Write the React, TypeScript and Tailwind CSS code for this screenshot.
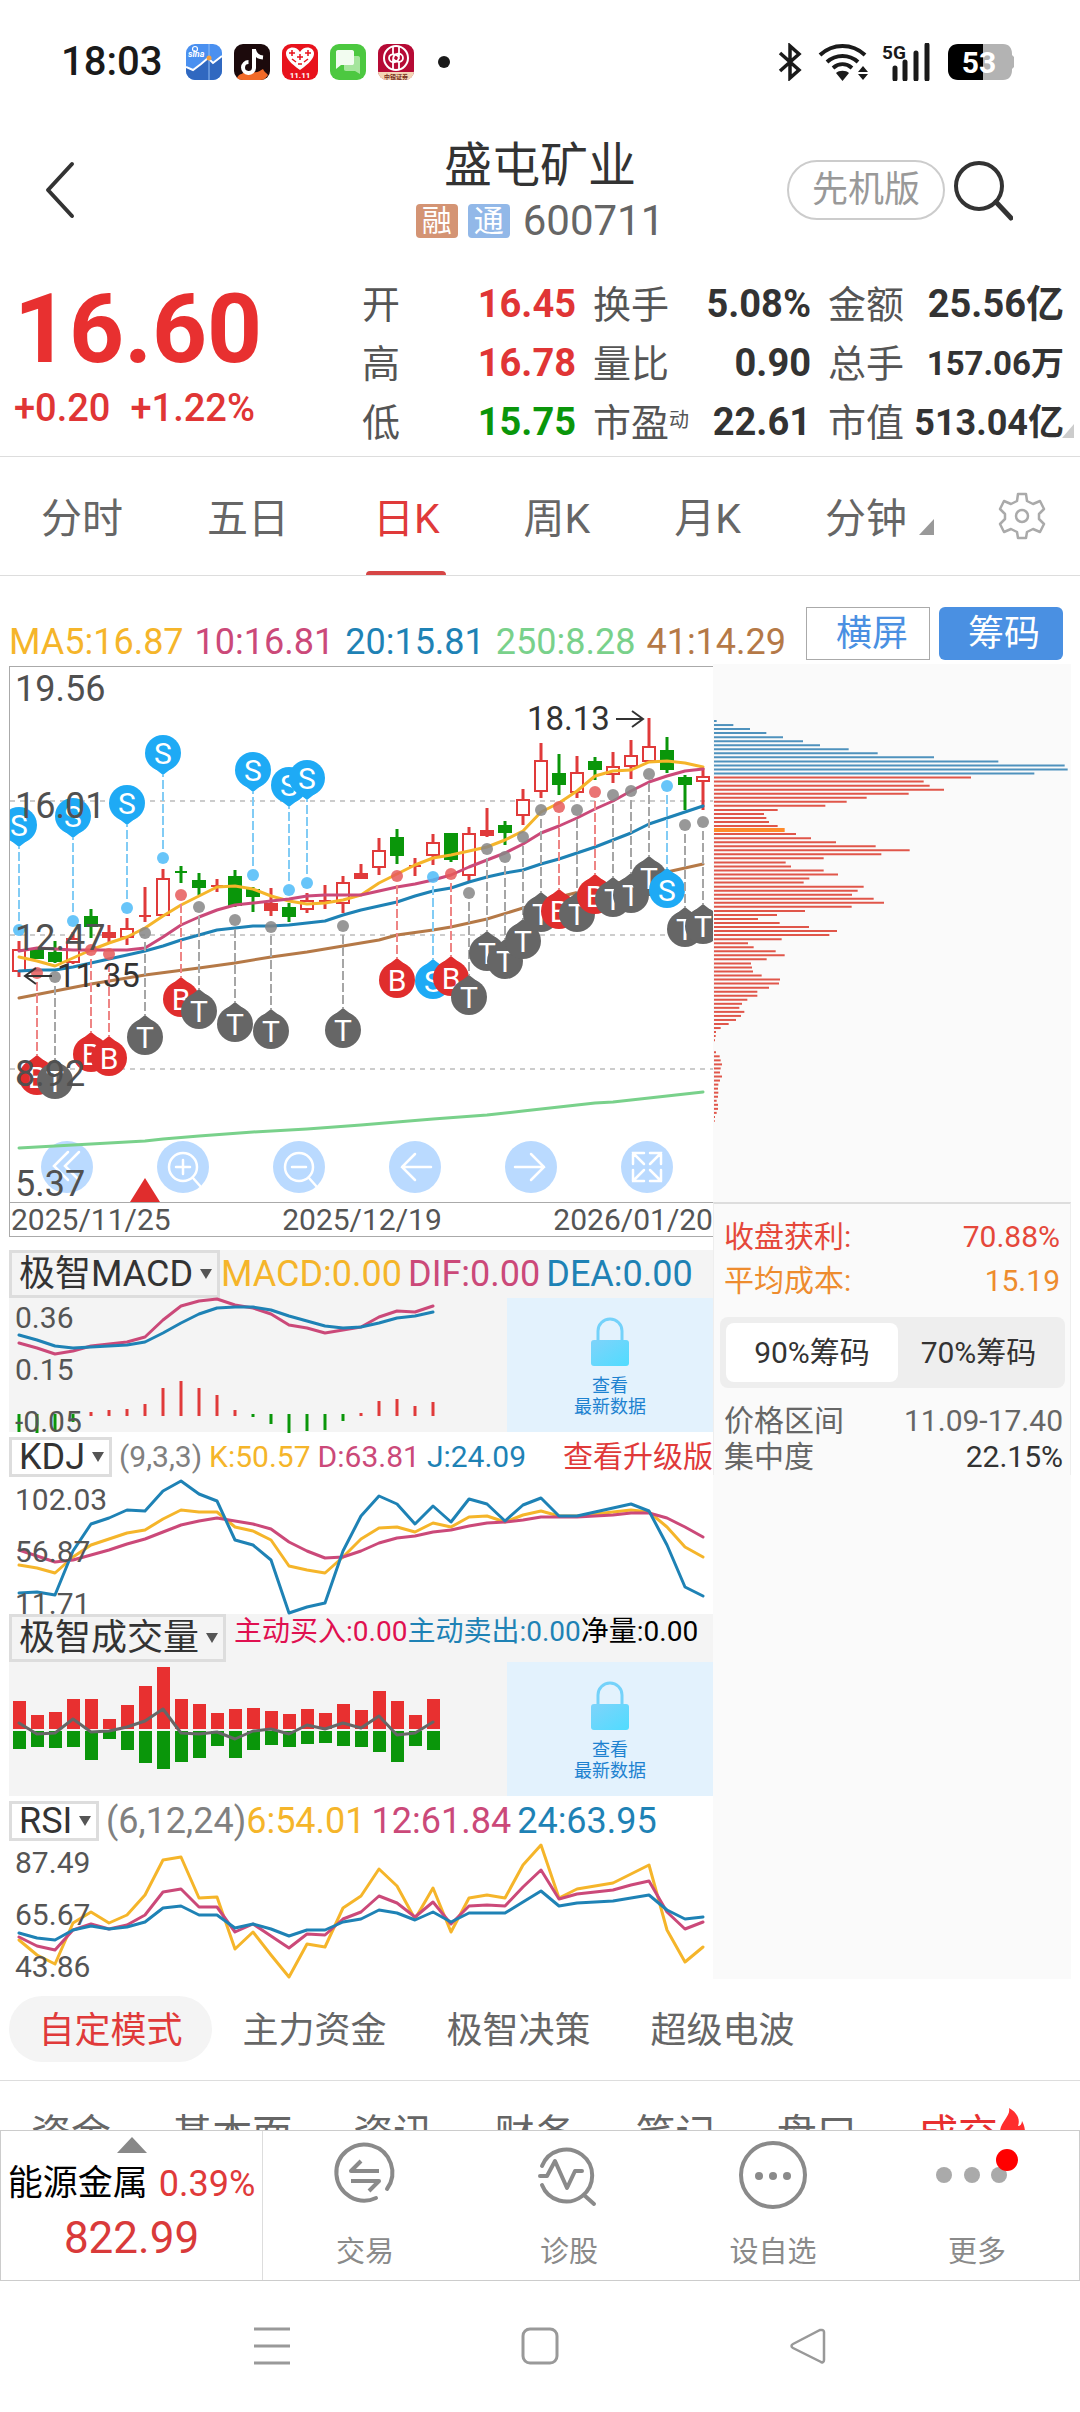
import React, { useState } from "react";

const YELLOW = "#f5b52a";
const PINK = "#cb4979";
const BLUE = "#1e82b5";
const BROWN = "#b57947";
const MINT = "#79d18b";
const UP = "#e03a3a";
const DOWN = "#0a960a";

/* Horizontal position of the n-th trading day. */
const dayX = (i: number) => 19 + i * 18;
const toPoints = (ys: number[]) => ys.map((y, i) => `${dayX(i)},${y}`).join(" ");
const scaled = (top: number, vs: number[]) => toPoints(vs.map((v) => Math.round(top + v / 3)));

type Kind = "r" | "g" | "h";
/* kind (r = filled red, g = green, h = hollow red), high, bodyTop, bodyBottom, low */
const candles: [Kind, number, number, number, number][] = [
  ["h", 941, 950, 971, 977], ["g", 947, 950, 958, 959], ["g", 941, 953, 961, 963], ["h", 932, 939, 962, 964],
  ["g", 909, 917, 926, 938], ["r", 925, 933, 937, 943], ["h", 918, 929, 937, 945], ["r", 887, 915, 917, 922],
  ["h", 869, 879, 915, 916], ["g", 866, 871, 873, 883], ["g", 873, 881, 887, 895], ["r", 879, 885, 887, 892],
  ["g", 870, 877, 905, 907], ["g", 887, 890, 896, 912], ["r", 888, 904, 910, 916], ["g", 903, 908, 916, 922],
  ["h", 893, 901, 909, 913], ["r", 885, 900, 902, 909], ["h", 876, 883, 903, 913], ["r", 864, 874, 878, 878],
  ["h", 838, 851, 867, 875], ["g", 829, 838, 855, 864], ["r", 858, 865, 867, 876], ["h", 834, 843, 855, 865],
  ["g", 833, 834, 859, 862], ["h", 827, 834, 875, 881], ["r", 808, 831, 835, 837], ["g", 821, 826, 832, 845],
  ["h", 789, 800, 815, 825], ["h", 743, 761, 791, 798], ["g", 754, 774, 784, 795], ["h", 756, 773, 792, 798],
  ["g", 757, 762, 769, 780], ["h", 752, 767, 774, 783], ["h", 740, 756, 766, 779], ["h", 718, 747, 761, 761],
  ["g", 737, 751, 769, 773], ["g", 775, 778, 784, 810], ["h", 768, 777, 781, 810],
];

const ma5 = [957, 961, 966, 958, 950, 943, 937, 928, 916, 905, 896, 887, 886, 889, 896, 901, 904, 903, 900, 895, 883, 874, 865, 858, 855, 851, 847, 840, 831, 812, 803, 791, 776, 771, 770, 762, 761, 763, 767];
const ma10 = [951, 948, 949, 950, 950, 950, 950, 948, 937, 925, 917, 910, 905, 903, 901, 899, 896, 895, 895, 895, 891, 887, 884, 880, 875, 867, 860, 853, 844, 833, 826, 818, 809, 801, 791, 782, 776, 771, 769];
const ma20 = [971, 970, 970, 967, 963, 959, 955, 951, 946, 940, 935, 930, 928, 926, 926, 925, 923, 921, 915, 910, 906, 902, 896, 891, 888, 882, 877, 873, 870, 864, 859, 853, 847, 840, 833, 824, 818, 812, 806];
const ma41 = "19,998 55,991 91,984 145,975 199,968 235,963 271,957 307,952 343,946 379,940 397,935 433,930 451,927 487,919 523,908 559,897 595,888 631,880 667,872 703,864";
const ma250 = "19,1148 91,1144 145,1141 163,1139 199,1136 253,1132 307,1129 361,1125 397,1122 433,1119 487,1115 523,1111 559,1107 595,1103 613,1102 703,1092";

/* day index, letter, y of the dot, +1 when the pin hangs below it and -1 when above */
const pins: [number, "S" | "B" | "T", number, 1 | -1][] = [
  [0, "S", 930, -1], [1, "B", 973, 1], [2, "T", 977, 1], [3, "S", 921, -1], [4, "B", 950, 1], [5, "B", 954, 1],
  [6, "S", 908, -1], [7, "T", 933, 1], [8, "S", 858, -1], [9, "B", 895, 1], [10, "T", 907, 1], [12, "T", 920, 1],
  [13, "S", 875, -1], [14, "T", 927, 1], [15, "S", 890, -1], [16, "S", 883, -1], [18, "T", 926, 1], [21, "B", 876, 1],
  [23, "S", 877, 1], [24, "B", 874, 1], [25, "T", 893, 1], [26, "T", 849, 1], [27, "T", 857, 1], [28, "T", 837, 1],
  [29, "T", 810, 1], [30, "B", 807, 1], [31, "T", 810, 1], [32, "B", 792, 1], [33, "T", 795, 1], [34, "T", 791, 1],
  [35, "T", 774, 1], [36, "S", 786, 1], [37, "T", 825, 1], [38, "T", 822, 1],
];
const pinFill = { S: "#1eaaf5", B: "#e02d2d", T: "#666666" };
const dotFill = { S: "#4dbbf8", B: "#e65a5a", T: "#868686" };
const stemFill = { S: "#82ccf5", B: "#ee8585", T: "#a6a6a6" };

const chipEnds = [
  50, 100, 150, 199, 249, 309, 360, 446, 533, 702, 895, 1094, 1103, 1003, 813, 671, 689, 732, 626, 500, 440, 376, 233,
  192, 199, 207, 233, 254, 288, 333, 408, 527, 629, 544, 371, 257, 273, 371, 414, 328, 311, 491, 473, 456, 521, 552,
  455, 315, 231, 174, 239, 327, 411, 388, 245, 144, 161, 227, 254, 200, 153, 156, 159, 185, 240, 237, 207, 172, 172,
  142, 126, 118, 133, 123, 108, 86, 62, 48, 47, 45, 42, 42, 48, 59, 62, 66, 62, 60, 66, 60, 55, 54, 55, 54, 50, 54, 54,
  50, 45, 44,
];

const axis = "fill-[#505050] text-[36px]";
const axisSmall = "fill-[#555555] text-[30px]";

function Line({ points, color }: { points: string; color: string }) {
  return <polyline points={points} fill="none" stroke={color} strokeWidth="3" strokeLinejoin="round" strokeLinecap="round" />;
}

function StatusBar() {
  return (
    <div className="flex h-[124px] items-center justify-between pr-[66px] pl-[61px] text-[#1a1a1a]">
      <div className="flex items-center gap-3">
        <span className="mr-3 text-[40px] leading-[48px] font-medium">18:03</span>
        <svg width="36" height="36" viewBox="0 0 36 36">
          <rect width="36" height="36" rx="9" fill="#4a90f0" />
          <path d="M0 23l7 3 8-6 7-6 5 5 9-7v15a9 9 0 0 1-9 9H9a9 9 0 0 1-9-9z" fill="#3068c0" />
          <path d="M0 23l7 3 8-6 7-6 5 5 9-7" fill="none" stroke="#fff" strokeWidth="2" />
          <path d="M23 0v36" stroke="#8fbdf5" strokeWidth="1" />
          <circle cx="23" cy="14" r="2.500" fill="#f5a040" />
          <text x="2" y="13" className="fill-white text-[9px] font-bold italic">sina</text>
          <circle cx="9" cy="5" r="2.500" fill="none" stroke="#fff" strokeWidth="1.2" />
        </svg>
        <svg width="36" height="36" viewBox="0 0 36 36">
          <rect width="36" height="36" rx="9" fill="#1c0a0c" />
          <path d="M3 34c2-5 5-3 7-6 3 3 5 1 8-1 3 3 8 0 11-2 1 3 4 4 5 6-2 3-4 5-8 5H9c-3 0-5-1-6-2z" fill="#f26a28" />
          <path d="M20 5v19a5.500 5.500 0 1 1-5.500-6M20 6c1 4 4 7 9 7.500" fill="none" stroke="#fff" strokeWidth="4" />
        </svg>
        <svg width="36" height="36" viewBox="0 0 36 36">
          <rect width="36" height="36" rx="9" fill="#e8121c" />
          <path d="M18 26C8 19 4 14 4 9.500 4 3 14 1 18 8c4-7 14-5 14 1.500C32 14 28 19 18 26z" fill="#fff" />
          <path d="M7 9h6M10 6v6M23 9h6M26 6v6M15 13h6M18 10v6M10 15l4 3M26 15l-4 3M16 20h4" fill="none" stroke="#e8121c" strokeWidth="1.500" />
          <text x="18" y="34" textAnchor="middle" className="fill-white text-[8px] font-bold">11.11</text>
        </svg>
        <svg width="36" height="36" viewBox="0 0 36 36">
          <rect width="36" height="36" rx="9" fill="#4cc840" />
          <path d="M14 12h14c1.500 0 2 1 2 2v16l-5-3H16c-1.500 0-2-1-2-2z" fill="#a5e59c" />
          <path d="M8 6h14c1.500 0 2 1 2 2v11c0 1.500-1 2-2 2H11l-5 4V8c0-1 .5-2 2-2z" fill="#f2fcf0" />
        </svg>
        <svg width="36" height="36" viewBox="0 0 36 36">
          <rect width="36" height="36" rx="9" fill="#b60a35" />
          <path d="M0 28h36a9 9 0 0 1-9 8H9a9 9 0 0 1-9-8z" fill="#f3d5b5" />
          <circle cx="18" cy="14" r="12" fill="none" stroke="#fff" strokeWidth="2" />
          <path d="M15 3v7M21 18v7M21 3v9c0 8-10 8-10 2s10-4 10 1M15 25v-9c0-8 10-8 10-2s-9 4-10 0" fill="none" stroke="#fff" strokeWidth="1.800" />
          <text x="18" y="35" textAnchor="middle" className="fill-[#7a3020] text-[6px] font-bold">中银证券</text>
        </svg>
        <span className="ml-3 h-3 w-3 rounded-full bg-[#1a1a1a]" />
      </div>
      <div className="flex items-center">
        <svg width="24" height="38" viewBox="0 0 24 38" fill="none" stroke="#1a1a1a" strokeWidth="3.500">
          <path d="M2 10l19 17-9 8V3l9 8L2 28" />
        </svg>
        <svg className="ml-4" width="52" height="38" viewBox="0 0 52 38" fill="none" stroke="#1a1a1a">
          <path d="M2 12c13-12 32-12 45 0M9 19c9-8 22-8 31 0M15 25c6-5 13-5 19 0" strokeWidth="4" />
          <path d="M18 30c3-3 10-3 13 0l-6.500 8z" fill="#1a1a1a" stroke="none" />
          <path d="M40 29l5-6 5 6zM40 31h10l-5 6z" fill="#1a1a1a" stroke="none" />
        </svg>
        <svg className="ml-3" width="52" height="38" viewBox="0 0 52 38">
          <text x="0" y="16" className="fill-[#1a1a1a] text-[19px] font-bold">5G</text>
          <path d="M13 25v11M23 19v17M34 10v26M45 2v34" stroke="#1a1a1a" strokeWidth="5" strokeLinecap="round" />
        </svg>
        <svg className="ml-[14px]" width="66" height="36" viewBox="0 0 66 36">
          <path d="M35 0h20c6 0 9 4 9 10v1l2 2v10l-2 2v1c0 6-3 10-9 10H35z" fill="#b3b3b3" />
          <path d="M35 0H10C4 0 0 4 0 10v16c0 6 4 10 10 10h25z" fill="#000" />
          <text x="31" y="29" textAnchor="middle" className="fill-white text-[30px] font-bold">53</text>
        </svg>
      </div>
    </div>
  );
}

function Header() {
  return (
    <header className="grid h-[132px] grid-cols-[1fr_auto_1fr] items-center">
      <button aria-label="返回" className="ml-[44px] w-8">
        <svg width="32" height="60" viewBox="0 0 32 60" fill="none" stroke="#333" strokeWidth="4" strokeLinecap="round" strokeLinejoin="round">
          <path d="M28 4L4 30l24 26" />
        </svg>
      </button>
      <div className="flex flex-col items-center gap-2 pt-1 text-center">
        <h1 className="text-[48px] leading-[50px] text-[#333]">盛屯矿业</h1>
        <div className="flex items-center gap-[10px]">
          <span className="h-[34px] w-[42px] rounded-[4px] bg-[#d49474] text-[30px] leading-[34px] text-white">融</span>
          <span className="h-[34px] w-[42px] rounded-[4px] bg-[#92b8e8] text-[30px] leading-[34px] text-white">通</span>
          <span className="ml-[3px] text-[42px] leading-[44px] text-[#666]">600711</span>
        </div>
      </div>
      <div className="flex items-center justify-end gap-2 pr-[67px]">
        <button className="h-[60px] w-[158px] rounded-full border-2 border-[#ccc] text-[36px] leading-[54px] text-[#999]">先机版</button>
        <button aria-label="搜索">
          <svg width="60" height="62" viewBox="0 0 60 62" fill="none" stroke="#333" strokeWidth="4">
            <circle cx="26" cy="27" r="23" />
            <path d="M43 43l15 16" strokeWidth="5" strokeLinecap="round" />
          </svg>
        </button>
      </div>
    </header>
  );
}

const stats: { label: string; sup?: string; value: string; tone: string }[] = [
  { label: "开", value: "16.45", tone: "text-[38px] text-[#e03535]" },
  { label: "换手", value: "5.08%", tone: "text-[38px] text-[#333]" },
  { label: "金额", value: "25.56亿", tone: "text-[38px] text-[#333]" },
  { label: "高", value: "16.78", tone: "text-[38px] text-[#e03535]" },
  { label: "量比", value: "0.90", tone: "text-[38px] text-[#333]" },
  { label: "总手", value: "157.06万", tone: "text-[33px] text-[#333]" },
  { label: "低", value: "15.75", tone: "text-[38px] text-[#0a960a]" },
  { label: "市盈", sup: "动", value: "22.61", tone: "text-[38px] text-[#333]" },
  { label: "市值", value: "513.04亿", tone: "text-[36px] text-[#333]" },
];

function Quote() {
  return (
    <section className="relative flex justify-between border-b border-[#ddd] pt-[19px] pr-4 pb-1 pl-[14px] font-bold">
      <div className="pt-1 text-[#e83030]">
        <p className="text-[96px] leading-[100px]">16.60</p>
        <p className="flex gap-5 pt-1 text-[38px] leading-[50px] font-medium text-[#e03535]">
          <span>+0.20</span>
          <span>+1.22%</span>
        </p>
      </div>
      <dl className="grid w-[702px] grid-cols-[214px_218px_236px] justify-between">
        {stats.map((s) => (
          <div key={s.label} className="flex h-[59px] items-center justify-between whitespace-nowrap">
            <dt className="text-[38px] leading-[50px] font-normal text-[#555]">
              {s.label}
              {s.sup && <span className="absolute text-[20px] leading-[44px]">{s.sup}</span>}
            </dt>
            <dd className={s.tone}>{s.value}</dd>
          </div>
        ))}
      </dl>
      <svg className="absolute right-[6px] bottom-[18px]" width="12" height="14" viewBox="0 0 12 14">
        <path d="M12 0v14H0z" fill="#ccc" />
      </svg>
    </section>
  );
}

function PeriodTabs() {
  const [active, setActive] = useState("日K");
  return (
    <nav className="flex h-[119px] gap-[64px] border-b border-[#ddd] pr-[34px] pl-[41px]">
      <div className="flex flex-1 justify-between">
        {["分时", "五日", "日K", "周K", "月K", "分钟"].map((t) => (
          <button
            key={t}
            onClick={() => setActive(t)}
            className={`relative flex items-center pt-[6px] text-[41px] leading-[50px] ${t === active ? "text-[#e03a3a]" : "text-[#666]"}`}
          >
            {t}
            {t === "分钟" && (
              <svg className="mt-4 ml-3" width="15" height="16" viewBox="0 0 15 16">
                <path d="M15 0v16H0z" fill="#999" />
              </svg>
            )}
            {t === active && <span className="absolute bottom-0 left-1/2 h-[4px] w-20 -translate-x-1/2 rounded-t-[4px] bg-[#d64545]" />}
          </button>
        ))}
      </div>
      <button aria-label="设置">
        <svg width="48" height="48" viewBox="0 0 48 48" fill="none" stroke="#aaa" strokeWidth="2.500" strokeLinejoin="round">
          <path d="M20 2h8l1 7 6 3 7-3 4 8-5 5v5l5 5-4 8-7-3-6 3-1 6h-8l-1-6-6-3-7 3-4-8 5-5v-5l-5-5 4-8 7 3 6-3z" />
          <circle cx="24" cy="24" r="6" />
        </svg>
      </button>
    </nav>
  );
}

function Legend() {
  return (
    <div className="flex items-end justify-between pt-[31px] pr-[17px] pb-[4px] pl-[9px]">
      <div className="flex gap-[11px] text-[36px] leading-[36px] whitespace-nowrap">
        <span className="text-[#f5b52a]">MA5:16.87</span>
        <span className="text-[#cb4979]">10:16.81</span>
        <span className="text-[#1e82b5]">20:15.81</span>
        <span className="text-[#79d18b]">250:8.28</span>
        <span className="text-[#b57947]">41:14.29</span>
      </div>
      <div className="flex gap-[9px] pl-2 text-[36px] leading-[46px]">
        <button className="h-[53px] w-[124px] border border-[#aaa] pl-2 text-[#4a90e2]">横屏</button>
        <button className="h-[53px] w-[124px] rounded-[6px] bg-[#4a90e2] pl-[6px] text-white">筹码</button>
      </div>
    </div>
  );
}

const toolIcons: { name: string; art: React.ReactNode }[] = [
  { name: "最早", art: <path d="M27 11L13 25l14 14M38 11L24 25l14 14" /> },
  { name: "放大", art: <><circle cx="26" cy="26" r="14" /><path d="M36 37l8 9M26 19v14M19 26h14" /></> },
  { name: "缩小", art: <><circle cx="26" cy="26" r="14" /><path d="M36 37l8 9M19 26h14" /></> },
  { name: "左移", art: <path d="M42 26H13M26 13L13 26l13 13" /> },
  { name: "右移", art: <path d="M10 26h29M26 13l13 13-13 13" /> },
  { name: "全屏", art: <path d="M12 23V12h11M12 12l11 11M29 12h11v11M40 12L29 23M12 29v11h11M12 40l11-11M40 29v11H29M40 40L29 29" /> },
];

function CandleChart() {
  return (
    <div className="relative border-t border-b border-l border-[#aaa]">
      <div className="absolute right-[40px] bottom-[9px] left-[31px] flex justify-between">
        {toolIcons.map((t) => (
          <button key={t.name} aria-label={t.name} className="h-[52px] w-[52px] rounded-full bg-[#badaff]">
            <svg viewBox="0 0 52 52" fill="none" stroke="#fff" strokeWidth="2.500" strokeLinecap="round">{t.art}</svg>
          </button>
        ))}
      </div>
      <svg className="pointer-events-none relative block w-full" viewBox="10 667 703 535">
        <g stroke="#ccc" strokeWidth="2" strokeDasharray="5 5">
          <path d="M10 801h703M10 935h703M10 1069h703" />
        </g>
        {candles.map(([k, hi, top, bottom, lo], i) => {
          const color = k === "g" ? DOWN : UP;
          const x = dayX(i);
          return (
            <g key={i} stroke={color} strokeWidth="3">
              <path d={`M${x} ${hi}V${top}M${x} ${bottom}V${lo}`} />
              <rect x={x - 6} y={top} width="12" height={bottom - top} strokeWidth={bottom - top < 3 ? 0 : 2} fill={k === "h" ? "#fff" : color} />
            </g>
          );
        })}
        <Line points={toPoints(ma5)} color={YELLOW} />
        <Line points={toPoints(ma10)} color={PINK} />
        <Line points={toPoints(ma20)} color={BLUE} />
        <Line points={ma41} color={BROWN} />
        <Line points={ma250} color={MINT} />
        {pins.map(([i, letter, y, dir]) => {
          const x = dayX(i);
          const cy = dir === 1 ? y + 104 : y - 105;
          const tip = cy - dir * 22;
          const base = cy - dir * 15;
          return (
            <g key={i}>
              <path d={`M${x} ${y + dir * 9}V${tip}`} stroke={stemFill[letter]} strokeWidth="2" strokeDasharray="9 3" />
              <circle cx={x} cy={y} r="6" fill={dotFill[letter]} fillOpacity="0.85" />
              <circle cx={x} cy={cy} r="18" fill={pinFill[letter]} />
              <path d={`M${x} ${tip}L${x + 9} ${base}H${x - 9}z`} fill={pinFill[letter]} />
              <text x={x} y={cy + 11} textAnchor="middle" className="fill-white text-[30px]">{letter}</text>
            </g>
          );
        })}
        <path d="M145 1178l15 24h-30z" fill="#e02d2d" />
        <g fill="none" stroke="#333" strokeWidth="2">
          <path d="M616 719h27M632 711l11 8-11 8" />
          <path d="M52 976H25M36 968l-11 8 11 8" />
        </g>
        <g className="fill-[#333333] text-[33px]">
          <text x="527" y="730">18.13</text>
          <text x="57" y="987">11.35</text>
        </g>
        <g className={axis}>
          <text x="15" y="701">19.56</text>
          <text x="15" y="818">16.01</text>
          <text x="15" y="950">12.47</text>
          <text x="15" y="1086">8.92</text>
          <text x="15" y="1196">5.37</text>
        </g>
      </svg>
    </div>
  );
}

function Picker({ label, tall }: { label: string; tall?: boolean }) {
  return (
    <label className="relative flex shrink-0 border-[3px] border-[#ddd]">
      <select aria-label="指标" className={`appearance-none bg-transparent pr-[23px] pl-[7px] text-[36px] text-[#333] ${tall ? "leading-[42px]" : "leading-[34px]"}`}>
        <option>{label}</option>
      </select>
      <svg className="pointer-events-none absolute top-1/2 right-[5px] -mt-[5px]" width="12" height="10" viewBox="0 0 12 10">
        <path d="M0 0h12L6 10z" fill="#555" />
      </svg>
    </label>
  );
}

function Locked() {
  return (
    <button className="absolute inset-y-0 right-0 flex w-[206px] flex-col items-center bg-[#e3f2fd] pt-[19px] text-[18px] leading-[21px] text-[#1e82d0]">
      <svg className="mb-2" width="38" height="50" viewBox="0 0 38 50">
        <defs>
          <linearGradient id="lock" x1="0" y1="0" x2="1" y2="1">
            <stop offset="0" stopColor="#7fd3fa" />
            <stop offset="1" stopColor="#50dcff" />
          </linearGradient>
        </defs>
        <path d="M7 24V14a12 12 0 0 1 24 0v10" fill="none" stroke="#74d2fa" strokeWidth="3" />
        <rect x="0" y="23" width="38" height="26" rx="3" fill="url(#lock)" />
      </svg>
      <span>查看</span>
      <span>最新数据</span>
    </button>
  );
}

const macdBars: [number, number][] = [
  [521, 575], [521, 578], [521, 570], [521, 545], [515, 528], [510, 528], [507, 528], [491, 528], [443, 528], [423, 528],
  [443, 528], [464, 528], [510, 528], [521, 532], [521, 552], [521, 578], [521, 572], [521, 570], [521, 542], [519, 528],
  [483, 528], [477, 528], [498, 528], [486, 528],
];
const buys = [303, 345, 336, 297, 297, 357, 315, 258, 201, 297, 312, 339, 327, 324, 333, 342, 327, 339, 312, 330, 273, 303, 345, 297];
const sells = [447, 441, 444, 441, 480, 417, 450, 489, 507, 486, 474, 438, 474, 450, 435, 441, 432, 429, 438, 441, 456, 486, 438, 450];

function Macd() {
  return (
    <section className="bg-[#f4f4f4]">
      <div className="flex h-12 items-start text-[36px] leading-[48px] whitespace-nowrap">
        <Picker label="极智MACD" tall />
        <span className="mr-[6px] ml-px text-[#f5b52a]">MACD:0.00</span>
        <span className="mr-[6px] text-[#cb4979]">DIF:0.00</span>
        <span className="text-[#1e82b5]">DEA:0.00</span>
      </div>
      <div className="relative">
        <svg className="block w-full overflow-visible" viewBox="9 1298 704 134">
          {macdBars.map(([a, b], i) => (
            <path key={i} d={`M${dayX(i)} ${Math.round(1240 + a / 3)}V${Math.round(1240 + b / 3)}`} stroke={a === 521 ? DOWN : UP} strokeWidth="3" />
          ))}
          <Line color={PINK} points={scaled(1240, [308, 324, 342, 332, 318, 312, 305, 291, 240, 197, 182, 177, 194, 203, 222, 254, 264, 278, 270, 261, 231, 213, 215, 198])} />
          <Line color={BLUE} points={scaled(1240, [285, 300, 318, 323, 320, 318, 314, 305, 280, 250, 222, 204, 201, 201, 210, 228, 243, 257, 264, 261, 248, 234, 228, 215])} />
          <g className={axisSmall}>
            <text x="15" y="1328">0.36</text>
            <text x="15" y="1380">0.15</text>
            <text x="15" y="1432">-0.05</text>
          </g>
        </svg>
        <Locked />
      </div>
    </section>
  );
}

function Kdj() {
  return (
    <section>
      <div className="flex h-12 items-center gap-[7px] pt-[2px] text-[30px] leading-[36px] whitespace-nowrap">
        <Picker label="KDJ" />
        <span className="text-[#808080]">(9,3,3)</span>
        <span className="text-[#f5b52a]">K:50.57</span>
        <span className="text-[#cb4979]">D:63.81</span>
        <span className="text-[#1e82b5]">J:24.09</span>
        <a href="#upgrade" className="ml-auto text-[#e03a3a]">查看升级版</a>
      </div>
      <svg className="block w-full overflow-visible" viewBox="9 1480 704 134">
        <Line color={YELLOW} points={scaled(1240, [975, 984, 999, 950, 914, 897, 880, 870, 837, 809, 815, 815, 860, 873, 900, 978, 990, 999, 950, 897, 863, 860, 876, 850, 862, 831, 828, 845, 826, 813, 828, 828, 822, 816, 810, 815, 860, 921, 950])} />
        <Line color={PINK} points={scaled(1240, [930, 949, 966, 960, 945, 930, 912, 897, 876, 855, 842, 834, 843, 852, 866, 905, 932, 953, 950, 933, 908, 894, 888, 876, 870, 858, 849, 845, 839, 831, 831, 831, 828, 825, 819, 819, 833, 861, 890])} />
        <Line color={BLUE} points={scaled(1240, [1060, 1055, 1064, 932, 852, 833, 809, 813, 752, 722, 763, 782, 900, 915, 960, 1118, 1100, 1088, 932, 828, 768, 793, 852, 798, 846, 776, 791, 842, 795, 773, 828, 828, 815, 803, 792, 813, 915, 1042, 1067])} />
        <g className={axisSmall}>
          <text x="15" y="1510">102.03</text>
          <text x="15" y="1562">56.87</text>
          <text x="15" y="1614">11.71</text>
        </g>
      </svg>
    </section>
  );
}

function Volume() {
  return (
    <section className="bg-[#f4f4f4]">
      <div className="flex h-12 items-start text-[28px] leading-[36px] whitespace-nowrap">
        <Picker label="极智成交量" tall />
        <span className="ml-2 text-[#e01050]">主动买入:0.00</span>
        <span className="text-[#1e82b5]">主动卖出:0.00</span>
        <span className="text-black">净量:0.00</span>
      </div>
      <div className="relative">
        <svg className="block w-full" viewBox="9 1662 704 134">
          {buys.map((v, i) => {
            const top = Math.round(1600 + v / 3);
            const bottom = Math.round(1600 + sells[i] / 3);
            return (
              <g key={i}>
                <rect x={dayX(i) - 6} y={top} width="13" height={1729 - top} fill="#e83030" />
                <rect x={dayX(i) - 6} y="1731" width="13" height={bottom - 1731} fill={DOWN} />
              </g>
            );
          })}
          <Line color="#666" points={scaled(1600, [369, 402, 398, 357, 396, 392, 380, 363, 326, 398, 401, 397, 416, 394, 386, 401, 375, 386, 368, 385, 348, 405, 398, 367])} />
        </svg>
        <Locked />
      </div>
    </section>
  );
}

function Rsi() {
  return (
    <section>
      <div className="flex h-12 items-center pt-[2px] text-[36px] leading-[40px] whitespace-nowrap">
        <Picker label="RSI" />
        <span className="ml-[7px] text-[#808080]">(6,12,24)</span>
        <span className="text-[#f5b52a]">6:54.01</span>
        <span className="ml-[6px] text-[#cb4979]">12:61.84</span>
        <span className="ml-[6px] text-[#1e82b5]">24:63.95</span>
      </div>
      <svg className="block w-full overflow-visible" viewBox="9 1844 704 135">
        <Line color={YELLOW} points={scaled(1600, [1020, 1066, 1091, 970, 937, 970, 944, 885, 779, 770, 893, 890, 1048, 995, 1065, 1131, 1032, 1040, 923, 887, 806, 857, 958, 864, 995, 893, 885, 893, 795, 736, 893, 867, 857, 849, 821, 795, 990, 1085, 1040])} />
        <Line color={PINK} points={scaled(1600, [1010, 1037, 1049, 990, 971, 986, 975, 945, 876, 867, 920, 920, 995, 972, 1008, 1044, 1001, 1004, 957, 936, 888, 908, 952, 907, 972, 918, 915, 917, 860, 809, 896, 882, 876, 869, 855, 843, 935, 987, 967])} />
        <Line color={BLUE} points={scaled(1600, [998, 1014, 1020, 990, 977, 986, 981, 966, 923, 917, 944, 944, 984, 972, 987, 1007, 990, 990, 966, 957, 930, 939, 960, 936, 967, 939, 939, 939, 905, 874, 917, 909, 906, 903, 894, 885, 930, 957, 951])} />
        <g className={axisSmall}>
          <text x="15" y="1873">87.49</text>
          <text x="15" y="1925">65.67</text>
          <text x="15" y="1977">43.86</text>
        </g>
      </svg>
    </section>
  );
}

function ChipPanel() {
  const [share, setShare] = useState("90%筹码");
  return (
    <aside className="bg-[#fafafa] text-[30px] leading-[36px]">
      <svg className="block w-full" viewBox="713 664 358 538">
        {chipEnds.map((end, i) => (
          <path
            key={i}
            d={`M714 ${721 + i * 4.04}h${(end - 42) / 3}`}
            stroke={i < 14 ? "#4f92bd" : i === 27 ? "#ff8a2a" : "#e0564a"}
            strokeWidth={i === 27 ? 4 : 2}
          />
        ))}
      </svg>
      <div className="border-x border-t-2 border-x-[#eee] border-t-[#ddd]">
        <div className="flex flex-col gap-2 px-[10px] pt-[15px]">
          <p className="flex justify-between text-[#e5483a]"><span>收盘获利:</span><span>70.88%</span></p>
          <p className="flex justify-between text-[#ee8c2e]"><span>平均成本:</span><span>15.19</span></p>
        </div>
        <div className="mr-[5px] ml-[6px] mt-[18px] grid grid-cols-[172fr_161fr] rounded-[8px] bg-[#eee] p-[6px] text-[#333]">
          {["90%筹码", "70%筹码"].map((s) => (
            <button key={s} onClick={() => setShare(s)} className={`h-[59px] rounded-[8px] ${s === share ? "bg-white" : ""}`}>{s}</button>
          ))}
        </div>
        <div className="mt-[15px] pr-[7px] pl-[10px] text-[#666]">
          <p className="flex justify-between"><span>价格区间</span><span>11.09-17.40</span></p>
          <p className="flex justify-between"><span>集中度</span><span className="text-[#333]">22.15%</span></p>
        </div>
      </div>
    </aside>
  );
}

function ModeRow() {
  const [mode, setMode] = useState("自定模式");
  return (
    <nav className="flex gap-px border-b border-[#ddd] pt-[17px] pb-[18px] pl-[9px] text-[36px] leading-[66px]">
      {["自定模式", "主力资金", "极智决策", "超级电波"].map((m) => (
        <button key={m} onClick={() => setMode(m)} className={`h-[66px] w-[203px] rounded-full pt-[2px] ${m === mode ? "bg-[#f4f4f4] text-[#e03a3a]" : "text-[#666]"}`}>{m}</button>
      ))}
    </nav>
  );
}

function InfoTabs() {
  return (
    <nav className="flex h-[49px] items-start justify-between overflow-hidden pt-[34px] pr-[82px] pl-[31px] text-[40px] leading-[40px] text-[#666]">
      {["资金", "基本面", "资讯", "财务", "笔记", "盘口"].map((t) => (
        <button key={t} className="shrink-0">{t}</button>
      ))}
      <button className="relative shrink-0 text-[#e83030]">
        成交
        <svg className="absolute -top-[7px] left-full" width="30" height="36" viewBox="0 0 30 36">
          <path d="M11 0c2 8-9 14-9 24 0 8 6 12 12 12s13-4 13-12c0-5-2-9-3-11 0 3-2 5-4 5C23 10 17 3 11 0z" fill="#ff2d2d" />
        </svg>
      </button>
    </nav>
  );
}

const actions: { name: string; art: React.ReactNode }[] = [
  {
    name: "交易",
    art: (
      <g fill="none" stroke="#8a8a8a" strokeWidth="4">
        <path d="M47 59A28 28 0 1 1 58 50" strokeLinecap="round" />
        <path d="M50 32H22l10-10M22 42h28L40 52" strokeLinejoin="round" />
      </g>
    ),
  },
  {
    name: "诊股",
    art: (
      <g fill="none" stroke="#8a8a8a" strokeWidth="4" strokeLinecap="round" strokeLinejoin="round">
        <path d="M9 27A26 26 0 1 1 9 46M51 56l10 9M7 37h7l8-15 12 27 8-17h7" />
      </g>
    ),
  },
  {
    name: "设自选",
    art: (
      <g fill="#8a8a8a">
        <circle cx="36" cy="36" r="32" fill="none" stroke="#8a8a8a" strokeWidth="4" />
        <circle cx="22" cy="37" r="4" />
        <circle cx="36" cy="37" r="4" />
        <circle cx="50" cy="37" r="4" />
      </g>
    ),
  },
  {
    name: "更多",
    art: (
      <g fill="#aaa">
        <circle cx="3" cy="36" r="8" />
        <circle cx="31" cy="36" r="8" />
        <circle cx="58" cy="36" r="8" />
        <circle cx="66" cy="21" r="11" fill="#ff0000" />
      </g>
    ),
  },
];

function Footer() {
  return (
    <footer className="grid h-[151px] grid-cols-[262px_1fr_1fr_1fr_1fr] border border-[#ccc] bg-white">
      <button className="flex flex-col items-center border-r border-[#ddd] pt-[6px]">
        <svg width="30" height="16" viewBox="0 0 30 16"><path d="M15 0l15 16H0z" fill="#888" /></svg>
        <span className="flex items-center gap-[11px] pt-2 text-[36px] leading-[46px] whitespace-nowrap">
          <span className="text-[35px] text-black">能源金属</span>
          <span className="text-[#e03a3a]">0.39%</span>
        </span>
        <span className="pt-[5px] text-[44px] leading-[52px] text-[#d93a3a]">822.99</span>
      </button>
      {actions.map((a) => (
        <button key={a.name} className="flex flex-col items-center pt-[8px] text-[29px] leading-[36px] text-[#8a8a8a]">
          <svg className="mb-[23px] overflow-visible" width="72" height="72" viewBox="0 0 72 72">{a.art}</svg>
          {a.name}
        </button>
      ))}
    </footer>
  );
}

function SystemNav() {
  return (
    <div className="flex h-[130px] items-center justify-center gap-[230px]">
      <button aria-label="任务">
        <svg width="38" height="38" viewBox="0 0 38 38" stroke="#999" strokeWidth="3"><path d="M1 2h36M1 19h36M1 36h36" /></svg>
      </button>
      <button aria-label="主页">
        <svg width="38" height="38" viewBox="0 0 38 38" fill="none" stroke="#999" strokeWidth="3"><rect x="2" y="2" width="34" height="34" rx="7" /></svg>
      </button>
      <button aria-label="后退">
        <svg width="38" height="38" viewBox="0 0 38 38" fill="none" stroke="#999" strokeWidth="2.500"><path d="M33 3c1 0 2 1 2 2v28c0 2-2 3-3 2L4 21c-2-1-2-3 0-4L31 3z" /></svg>
      </button>
    </div>
  );
}

export default function App() {
  return (
    <div className="flex min-h-screen flex-col bg-white font-[Roboto,'Noto_Sans_CJK_SC',sans-serif]">
      <StatusBar />
      <Header />
      <Quote />
      <PeriodTabs />
      <Legend />
      <main className="grid grid-cols-[704fr_358fr] px-[9px]">
        <div className="pt-[2px]">
          <CandleChart />
          <div className="mb-[13px] flex justify-between border-b border-l border-[#aaa] pl-px text-[30px] leading-[33px] text-[#555]">
            <span>2025/11/25</span>
            <span>2025/12/19</span>
            <span>2026/01/20</span>
          </div>
          <Macd />
          <Kdj />
          <Volume />
          <Rsi />
        </div>
        <ChipPanel />
      </main>
      <ModeRow />
      <InfoTabs />
      <Footer />
      <SystemNav />
    </div>
  );
}
